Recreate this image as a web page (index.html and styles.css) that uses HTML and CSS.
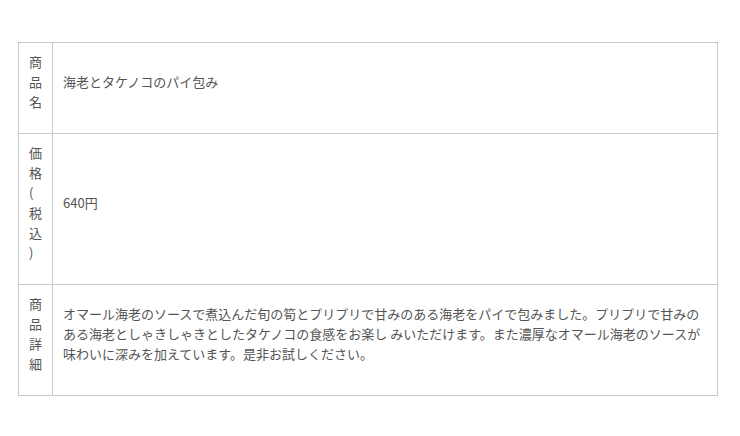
FILE: index.html
```html
<!DOCTYPE html>
<html lang="ja">
<head>
<meta charset="utf-8">
<title>商品情報</title>
<link rel="stylesheet" href="styles.css">
</head>
<body>
<div class="page">
  <table class="spec">
    <tr>
      <th class="label">商品名</th>
      <td class="value">海老とタケノコのパイ包み</td>
    </tr>
    <tr>
      <th class="label">価格(税込)</th>
      <td class="value">640円</td>
    </tr>
    <tr>
      <th class="label">商品詳細</th>
      <td class="value">オマール海老のソースで煮込んだ旬の筍とプリプリで甘みのある海老をパイで包みました。プリプリで甘みのある海老としゃきしゃきとしたタケノコの食感をお楽し みいただけます。また濃厚なオマール海老のソースが味わいに深みを加えています。是非お試しください。</td>
    </tr>
  </table>
</div>
</body>
</html>
```

FILE: styles.css
```css
html, body {
  margin: 0;
  padding: 0;
  background: #ffffff;
}

.page {
  padding: 42px 0 0 18px;
  font-family: "Noto Sans CJK JP", "Noto Sans", sans-serif;
  font-size: 13px;
  line-height: 20px;
  color: #555555;
}

.spec {
  border-collapse: collapse;
  width: 700px;
}

.label,
.value {
  border: 1px solid #c9c9c9;
  padding: 9px 10px 21px 10px;
  font-weight: normal;
  text-align: left;
}

.label {
  width: 13px;
  max-width: 13px;
  vertical-align: top;
  word-break: break-all;
  line-break: anywhere;
  overflow-wrap: anywhere;
}

.value {
  vertical-align: middle;
}
```
